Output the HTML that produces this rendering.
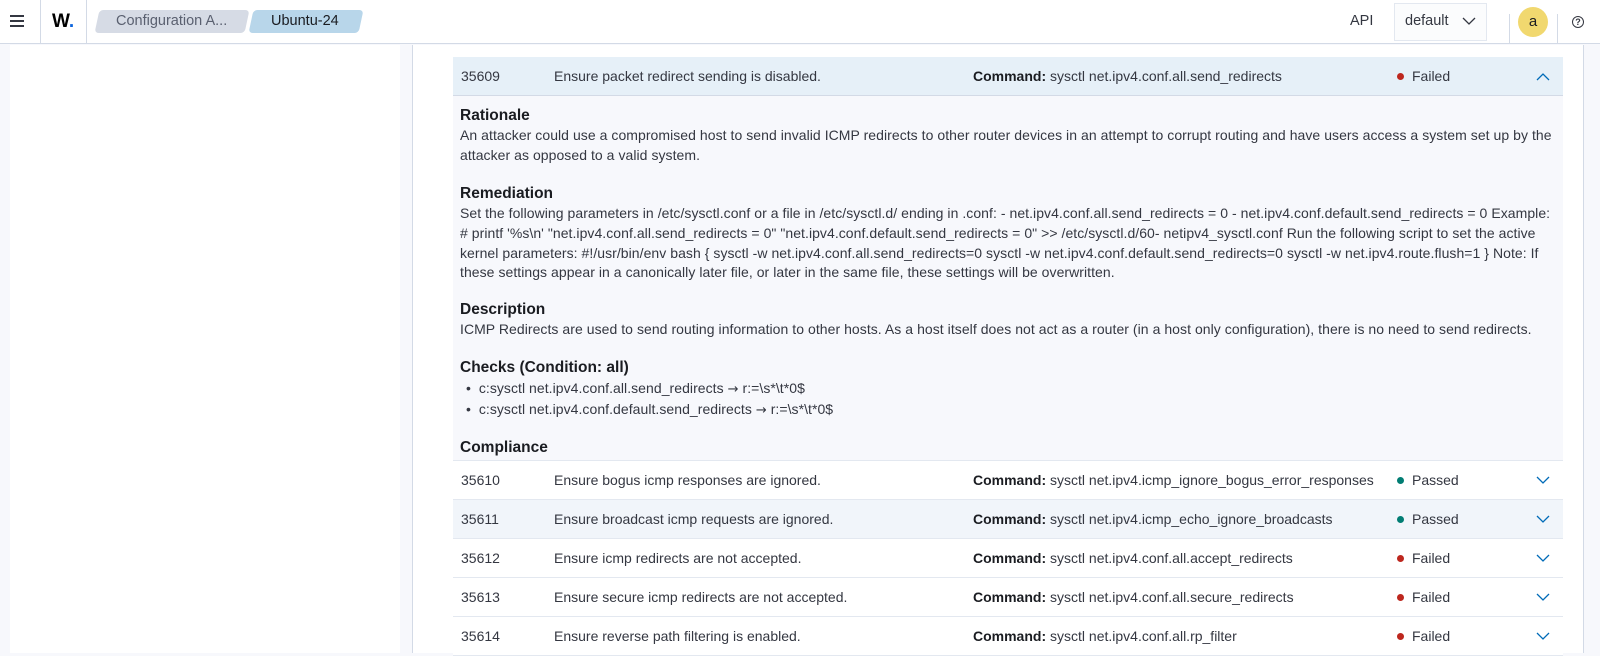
<!DOCTYPE html>
<html><head><meta charset="utf-8"><style>
*{box-sizing:border-box;margin:0;padding:0}
body{width:1600px;height:653px;overflow:hidden;background:#f7f8fc;font-family:"Liberation Sans",sans-serif;color:#343741;position:relative;font-size:14px}
.a{position:absolute}
.hdr{left:0;top:0;width:1600px;height:44px;background:#fff;border-bottom:1px solid #d3dae6}
.vl{position:absolute;width:1px;background:#d3dae6}
.row{position:absolute;left:453px;width:1110px;height:39px;border-bottom:1px solid #e3e8f0;background:#fff;font-size:14px;color:#343741}
.row span{position:absolute;top:11px;white-space:nowrap}
.dot{display:inline-block;width:7px;height:7px;border-radius:50%;margin-right:8px;vertical-align:1px}
.h{position:absolute;left:460px;font-size:15.5px;font-weight:bold;color:#1a1c21}
.p{position:absolute;left:460px;font-size:14px;line-height:19.8px;white-space:nowrap;color:#343741;letter-spacing:0.05px}
.ar{font-family:"DejaVu Sans",sans-serif;font-size:13px}
</style></head><body>
<div class="a hdr"></div>
<div class="a" style="left:10px;top:15px;width:14px;height:2px;background:#343741;box-shadow:0 5px 0 #343741,0 10px 0 #343741"></div>
<div class="vl" style="left:40px;top:0;height:44px"></div>
<div class="a" style="left:52px;top:11px;font-size:19px;font-weight:bold;color:#000">W<span style="color:#0b64dd">.</span></div>
<div class="vl" style="left:86px;top:0;height:44px"></div>
<div class="a" style="left:97px;top:10px;width:150px;height:23px;background:#d6dbe5;border-radius:4px;transform:skewX(-12deg)"></div>
<div class="a" style="left:116px;top:13px;font-size:14.5px;color:#5a6070">Configuration A...</div>
<div class="a" style="left:251px;top:10px;width:110px;height:23px;background:#b8d6ea;border-radius:4px;transform:skewX(-12deg)"></div>
<div class="a" style="left:271px;top:13px;font-size:14.5px;color:#1a1c21">Ubuntu-24</div>
<div class="a" style="left:1350px;top:13px;font-size:14.5px;color:#343741">API</div>
<div class="a" style="left:1394px;top:3px;width:93px;height:38px;border:1px solid #e3e8f0;background:#fbfcfd"></div>
<div class="a" style="left:1405px;top:13px;font-size:14.5px;color:#343741">default</div>
<svg class="a" style="left:1462px;top:16px" width="14" height="10"><path d="M1 2l6 6 6-6" fill="none" stroke="#343741" stroke-width="1.3"/></svg>
<div class="vl" style="left:1509px;top:14px;height:30px"></div>
<div class="a" style="left:1518px;top:7px;width:30px;height:30px;border-radius:50%;background:#f1d86f;text-align:center;line-height:30px;font-size:15px;color:#1a1c21">a</div>
<div class="vl" style="left:1557px;top:14px;height:30px"></div>
<div class="a" style="left:1572px;top:16px;width:12px;height:12px;border:1.3px solid #343741;border-radius:50%;font-size:9px;line-height:10px;text-align:center;font-weight:bold">?</div>

<div class="a" style="left:10px;top:45px;width:390px;height:608px;background:#fff"></div>
<div class="vl" style="left:412px;top:45px;height:608px"></div>
<div class="vl" style="left:1583px;top:45px;height:608px"></div>
<div class="a" style="left:413px;top:45px;width:1170px;height:608px;background:#fff"></div>
<div class="a" style="left:453px;top:96px;width:1110px;height:365px;background:#f7f8fc"></div>

<div class="row" style="top:57px;background:#e6f0f8;border-bottom-color:#d3dae6"><span style="left:8px">35609</span><span style="left:101px">Ensure packet redirect sending is disabled.</span><span style="left:520px"><b style="color:#1a1c21">Command:</b> sysctl net.ipv4.conf.all.send_redirects</span><span style="left:944px"><i class="dot" style="background:#bd271e"></i>Failed</span><svg style="position:absolute;left:1083px;top:15px" width="14" height="9"><path d="M1 8l6-6 6 6" fill="none" stroke="#006bb8" stroke-width="1.3"/></svg></div>

<div class="h" style="top:107px">Rationale</div>
<div class="p" style="top:126px">An attacker could use a compromised host to send invalid ICMP redirects to other router devices in an attempt to corrupt routing and have users access a system set up by the<br>attacker as opposed to a valid system.</div>
<div class="h" style="top:185px">Remediation</div>
<div class="p" style="top:204px">Set the following parameters in /etc/sysctl.conf or a file in /etc/sysctl.d/ ending in .conf: - net.ipv4.conf.all.send_redirects = 0 - net.ipv4.conf.default.send_redirects = 0 Example:<br># printf '%s\n' "net.ipv4.conf.all.send_redirects = 0" "net.ipv4.conf.default.send_redirects = 0" &gt;&gt; /etc/sysctl.d/60- netipv4_sysctl.conf Run the following script to set the active<br>kernel parameters: #!/usr/bin/env bash { sysctl -w net.ipv4.conf.all.send_redirects=0 sysctl -w net.ipv4.conf.default.send_redirects=0 sysctl -w net.ipv4.route.flush=1 } Note: If<br>these settings appear in a canonically later file, or later in the same file, these settings will be overwritten.</div>
<div class="h" style="top:301px">Description</div>
<div class="p" style="top:320px">ICMP Redirects are used to send routing information to other hosts. As a host itself does not act as a router (in a host only configuration), there is no need to send redirects.</div>
<div class="h" style="top:359px">Checks (Condition: all)</div>
<div class="p" style="top:379px;left:466px">•&nbsp; c:sysctl net.ipv4.conf.all.send_redirects <span class="ar">→</span> r:=\s*\t*0$<br>•&nbsp; c:sysctl net.ipv4.conf.default.send_redirects <span class="ar">→</span> r:=\s*\t*0$</div>
<div class="h" style="top:439px">Compliance</div>
<div class="a" style="left:453px;top:460px;width:1110px;height:1px;background:#e3e8f0"></div>

<div class="row" style="top:461px"><span style="left:8px">35610</span><span style="left:101px">Ensure bogus icmp responses are ignored.</span><span style="left:520px"><b style="color:#1a1c21">Command:</b> sysctl net.ipv4.icmp_ignore_bogus_error_responses</span><span style="left:944px"><i class="dot" style="background:#017d73"></i>Passed</span><svg style="position:absolute;left:1083px;top:15px" width="14" height="9"><path d="M1 1l6 6 6-6" fill="none" stroke="#006bb8" stroke-width="1.3"/></svg></div>
<div class="row" style="top:500px;background:#f1f5fa"><span style="left:8px">35611</span><span style="left:101px">Ensure broadcast icmp requests are ignored.</span><span style="left:520px"><b style="color:#1a1c21">Command:</b> sysctl net.ipv4.icmp_echo_ignore_broadcasts</span><span style="left:944px"><i class="dot" style="background:#017d73"></i>Passed</span><svg style="position:absolute;left:1083px;top:15px" width="14" height="9"><path d="M1 1l6 6 6-6" fill="none" stroke="#006bb8" stroke-width="1.3"/></svg></div>
<div class="row" style="top:539px"><span style="left:8px">35612</span><span style="left:101px">Ensure icmp redirects are not accepted.</span><span style="left:520px"><b style="color:#1a1c21">Command:</b> sysctl net.ipv4.conf.all.accept_redirects</span><span style="left:944px"><i class="dot" style="background:#bd271e"></i>Failed</span><svg style="position:absolute;left:1083px;top:15px" width="14" height="9"><path d="M1 1l6 6 6-6" fill="none" stroke="#006bb8" stroke-width="1.3"/></svg></div>
<div class="row" style="top:578px"><span style="left:8px">35613</span><span style="left:101px">Ensure secure icmp redirects are not accepted.</span><span style="left:520px"><b style="color:#1a1c21">Command:</b> sysctl net.ipv4.conf.all.secure_redirects</span><span style="left:944px"><i class="dot" style="background:#bd271e"></i>Failed</span><svg style="position:absolute;left:1083px;top:15px" width="14" height="9"><path d="M1 1l6 6 6-6" fill="none" stroke="#006bb8" stroke-width="1.3"/></svg></div>
<div class="row" style="top:617px"><span style="left:8px">35614</span><span style="left:101px">Ensure reverse path filtering is enabled.</span><span style="left:520px"><b style="color:#1a1c21">Command:</b> sysctl net.ipv4.conf.all.rp_filter</span><span style="left:944px"><i class="dot" style="background:#bd271e"></i>Failed</span><svg style="position:absolute;left:1083px;top:15px" width="14" height="9"><path d="M1 1l6 6 6-6" fill="none" stroke="#006bb8" stroke-width="1.3"/></svg></div>
</body></html>
